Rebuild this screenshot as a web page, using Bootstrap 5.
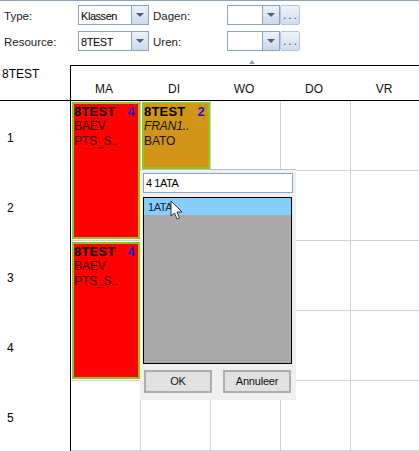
<!DOCTYPE html>
<html lang="nl">
<head>
    <meta charset="UTF-8">
    <meta name="viewport" content="width=device-width, initial-scale=1.0">
    <title>Rooster</title>
    <link href="https://cdn.jsdelivr.net/npm/bootstrap@5.3.0/dist/css/bootstrap.min.css" rel="stylesheet">
    <style>
        html, body { height: 451px; overflow: hidden; }
        body { font-family: "Liberation Sans", Arial, sans-serif; font-size: 12px; color: #000; background: #fff; position: relative; }

        /* Filterbalk */
        .filter-bar { height: 65px; border-top: 1px solid #8aa2c4; padding-top: 4px; position: relative; }
        .filter-row { height: 26px; }
        .filter-label { line-height: 23px; height: 20px; color: #222; font-size: 11.5px; }
        .label-first { width: 78px; padding-left: 4px; }
        .label-second { width: 78px; padding-left: 4px; }
        .combo { height: 20px; border: 1px solid #8aa2c4; background: #fff; }
        .combo-wide { width: 71px; }
        .combo-narrow { width: 53px; }
        .combo-text { flex: 1; padding-left: 2px; line-height: 20px; font-size: 11px; letter-spacing: -.45px; }
        .combo-arrow { width: 17px; border-left: 1px solid #8aa2c4; background: linear-gradient(#eef3f9, #c9d8ea); }
        .combo-arrow::after { content: ""; border: 4px solid transparent; border-top: 4px solid #4f5f75; border-bottom-width: 0; }
        .dots-btn { width: 20px; height: 20px; border: 1px solid #b4c6dc; border-radius: 2px; background: linear-gradient(#eef3f9, #cfddec); color: #6a35b0; line-height: 18px; letter-spacing: 2px; padding-left: 2px; }
        .collapse-arrow { position: absolute; left: 249px; top: 59px; border: 3px solid transparent; border-top-width: 0; border-bottom: 4px solid #8aa2c4; }

        /* Rooster */
        .timetable { display: grid; grid-template-columns: 71px repeat(5, 70px); width: 421px; }
        .corner { height: 36px; border-bottom: 1px solid #000; border-right: 1px solid #000; padding: 2px; line-height: 14px; }
        .day-header { height: 36px; border-top: 1px solid #000; border-bottom: 1px solid #000; text-align: center; line-height: 14px; padding: 16px 4px 0 0; color: #111; }
        .hour-label { height: 70px; padding: 28px 0 0 7px; border-right: 1px solid #000; }
        .slot { border-right: 1px solid #d2d2d2; border-bottom: 1px solid #d2d2d2; }
        .lesson { margin: 1px 1px 2px 1px; border: 2px solid #8fc814; padding: 0 3px 0 0; line-height: 15px; z-index: 1; letter-spacing: -.1px; }
        .lesson-red { background: #f00; color: #300; }
        .lesson-orange { background: #d29518; color: #111; }
        .lesson-title { font-weight: 700; font-size: 13px; letter-spacing: .2px; color: #000; }
        .lesson-count { color: #1a1ac8; }

        /* Keuzevenster */
        .picker { position: absolute; left: 140px; top: 169px; width: 156px; height: 231px; background: #f0f0f0; border-top: 1px solid #b9c2cc; padding: 3px 3px 0; z-index: 2; font-size: 11px; letter-spacing: -.45px; }
        .picker-input { height: 20px; width: 150px; border: 1px solid #8aa2c4; background: #fff; padding-left: 2px; line-height: 19px; }
        .picker-list { margin-top: 4px; width: 149px; height: 167px; border: 1px solid #000; background: #a9a9a9; }
        .picker-item { height: 17px; background: #87cefa; padding-left: 4px; line-height: 19px; color: #123; }
        .picker-btn { width: 68px; height: 23px; border: 2px solid #adadad; background: #e1e1e1; border-radius: 0; padding: 0; font-size: 11px; letter-spacing: -.2px; line-height: 19px; color: #111; }
        .picker-btns { margin: 6px 0 0 1px; width: 147px; }
        .pointer { position: absolute; left: 170px; top: 200px; z-index: 3; }
    </style>
</head>
<body>

    <!-- Filterbalk -->
    <div class="filter-bar">
        <div class="filter-row d-flex">
            <div class="filter-label label-first">Type:</div>
            <div class="combo combo-wide d-flex">
                <div class="combo-text">Klassen</div>
                <div class="combo-arrow d-flex align-items-center justify-content-center"></div>
            </div>
            <div class="filter-label label-second">Dagen:</div>
            <div class="combo combo-narrow d-flex">
                <div class="combo-text"></div>
                <div class="combo-arrow d-flex align-items-center justify-content-center"></div>
            </div>
            <div class="dots-btn">...</div>
        </div>
        <div class="filter-row d-flex">
            <div class="filter-label label-first">Resource:</div>
            <div class="combo combo-wide d-flex">
                <div class="combo-text">8TEST</div>
                <div class="combo-arrow d-flex align-items-center justify-content-center"></div>
            </div>
            <div class="filter-label label-second">Uren:</div>
            <div class="combo combo-narrow d-flex">
                <div class="combo-text"></div>
                <div class="combo-arrow d-flex align-items-center justify-content-center"></div>
            </div>
            <div class="dots-btn">...</div>
        </div>
        <div class="collapse-arrow"></div>
    </div>

    <!-- Rooster -->
    <div id="timetable" class="timetable"></div>

    <!-- Keuzevenster -->
    <div class="picker">
        <div class="picker-input">4 1ATA</div>
        <div class="picker-list">
            <div class="picker-item">1ATA</div>
        </div>
        <div class="picker-btns d-flex justify-content-between">
            <button class="btn picker-btn">OK</button>
            <button class="btn picker-btn">Annuleer</button>
        </div>
    </div>

    <svg class="pointer" width="14" height="21" viewBox="0 0 14 21">
        <path d="M1 1 V16 L4.5 13 L7 19 L9.5 18 L7 12 H12 Z" fill="#fff" stroke="#333" stroke-width="1"/>
    </svg>

    <script>
        const days = ["MA", "DI", "WO", "DO", "VR"];
        const lessons = [
            { col: 1, row: 1, span: 2, color: "red", count: 4, lines: ["BAEV", "PTS_S.."] },
            { col: 2, row: 1, span: 1, color: "orange", count: 2, lines: ["<i>FRAN1..</i>", "BATO"] },
            { col: 1, row: 3, span: 2, color: "red", count: 4, lines: ["BAEV", "PTS_S.."] }
        ];

        let html = `<div class="corner">8TEST</div>`;
        days.forEach(day => {
            html += `<div class="day-header">${day}</div>`;
        });

        // Lege vakken
        for (let row = 1; row <= 5; row++) {
            html += `<div class="hour-label" style="grid-column:1;grid-row:${row + 1}">${row}</div>`;
            for (let col = 1; col <= 5; col++) {
                html += `<div class="slot" style="grid-column:${col + 1};grid-row:${row + 1}"></div>`;
            }
        }

        // Lessen
        lessons.forEach(l => {
            html += `<div class="lesson lesson-${l.color}" style="grid-column:${l.col + 1};grid-row:${l.row + 1} / span ${l.span}">
                <div class="lesson-title d-flex justify-content-between"><span>8TEST</span><span class="lesson-count">${l.count}</span></div>
                ${l.lines.map(t => `<div>${t}</div>`).join("")}
            </div>`;
        });
        document.getElementById("timetable").innerHTML = html;
    </script>
    <script src="https://cdn.jsdelivr.net/npm/bootstrap@5.3.0/dist/js/bootstrap.bundle.min.js"></script>
</body>
</html>
